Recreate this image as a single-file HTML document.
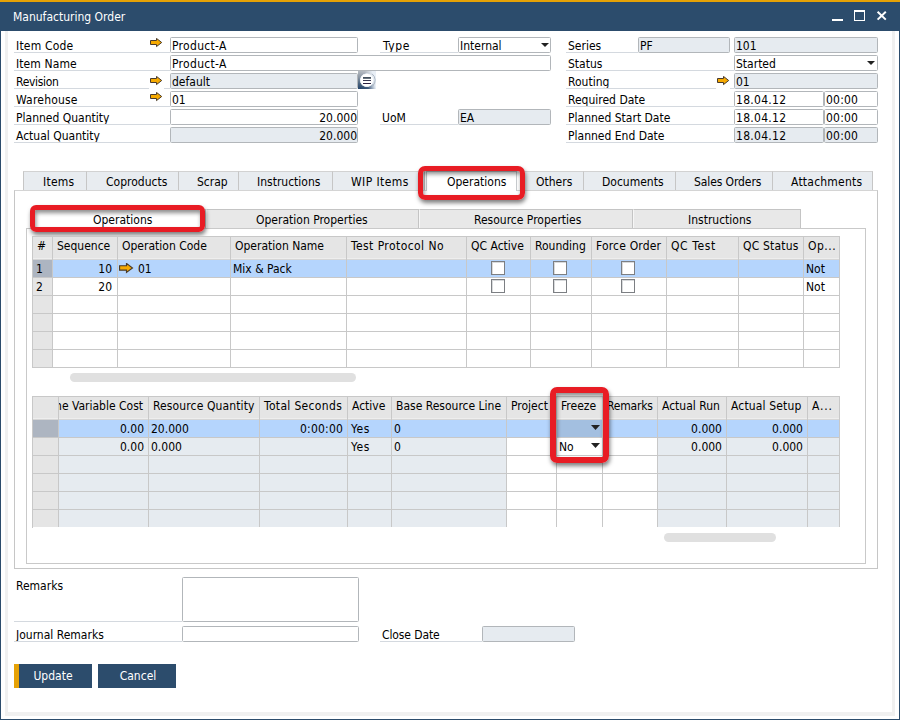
<!DOCTYPE html>
<html><head><meta charset="utf-8"><title>Manufacturing Order</title>
<style>
html,body{margin:0;padding:0;}
body{width:900px;height:720px;position:relative;overflow:hidden;background:#fff;font-family:"DejaVu Sans Condensed","DejaVu Sans","Liberation Sans",sans-serif;font-size:12px;color:#000;font-stretch:condensed;}
div,svg{position:absolute;box-sizing:border-box;}
.t{white-space:nowrap;line-height:16px;height:16px;}
.f{border:1px solid #b2b6ba;border-radius:1.5px;white-space:nowrap;line-height:14px;padding:0 2px 0 1px;overflow:hidden;}
.f span{position:relative;top:1px;}
.tab{background:#e8ecf0;border:1px solid #c6c6c6;border-top-color:#d2d2d2;border-bottom:none;line-height:16px;white-space:nowrap;}
.stab{background:#e8e8e8;border-top:1px solid #c4c4c4;border-right:1px solid #c4c4c4;line-height:20px;text-align:center;white-space:nowrap;padding-left:6px;overflow:hidden;}
.ls1{letter-spacing:0.3px}.ls2{letter-spacing:0.6px}.ls3{letter-spacing:0.15px}
.gh{background:linear-gradient(to bottom,#e5e5e5 0,#e5e5e5 21px,#eee 21px,#eee 22px,#d6d6d6 22px);border-right:1px solid #c8c8c8;line-height:18px;white-space:nowrap;overflow:hidden;padding-left:4px;}
.c{border-right:1px solid #c8c8c8;border-bottom:1px solid #c8c8c8;line-height:19px;white-space:nowrap;overflow:hidden;padding:0 3px;}
.cb{width:14px;height:14px;border:1px solid #7c7f83;background:#fff;box-shadow:inset 1px 1px 0 #d8dadc;}
</style></head><body>

<div class="" style="left:0px;top:0px;width:900px;height:2px;background:#e6a206"></div>
<div class="" style="left:0px;top:2px;width:900px;height:29px;background:#2c4c6c"></div>
<div class="" style="left:0px;top:31px;width:1px;height:689px;background:#2c4c6c"></div>
<div class="" style="left:899px;top:31px;width:1px;height:689px;background:#2c4c6c"></div>
<div class="" style="left:0px;top:719px;width:900px;height:1px;background:#2c4c6c"></div>
<div class="" style="left:5px;top:31px;width:3px;height:685px;background:#f0f0f0"></div>
<div class="" style="left:892px;top:31px;width:3px;height:685px;background:#f0f0f0"></div>
<div class="" style="left:5px;top:712px;width:890px;height:4px;background:#f0f0f0"></div>
<div class="t" style="left:13px;top:9px;color:#fff;">Manufacturing Order</div>
<div class="" style="left:832px;top:19px;width:11px;height:2px;background:#fff"></div>
<div class="" style="left:854px;top:10px;width:11px;height:11px;border:1px solid #fff;border-top-width:2px"></div>
<svg class="a" style="left:876px;top:10px" width="12" height="12" viewBox="0 0 12 12"><path d="M1.6 1.8 L9.8 9.6 M9.8 1.8 L1.6 9.6" stroke="#fff" stroke-width="2" fill="none"/></svg>
<div class="t" style="left:16px;top:38px;letter-spacing:0.2px">Item Code</div>
<div class="" style="left:14px;top:52px;width:156px;height:1px;background:#d4d9df"></div>
<div class="t" style="left:16px;top:56px;letter-spacing:0.1px">Item Name</div>
<div class="" style="left:14px;top:70px;width:156px;height:1px;background:#d4d9df"></div>
<div class="t" style="left:16px;top:74px;letter-spacing:-0.3px">Revision</div>
<div class="" style="left:14px;top:88px;width:156px;height:1px;background:#d4d9df"></div>
<div class="t" style="left:16px;top:92px;letter-spacing:0.2px">Warehouse</div>
<div class="" style="left:14px;top:106px;width:156px;height:1px;background:#d4d9df"></div>
<div class="t" style="left:16px;top:110px;">Planned Quantity</div>
<div class="" style="left:14px;top:124px;width:156px;height:1px;background:#d4d9df"></div>
<div class="t" style="left:16px;top:128px;">Actual Quantity</div>
<div class="" style="left:14px;top:142px;width:156px;height:1px;background:#d4d9df"></div>
<svg class="a" style="left:150px;top:38px" width="13" height="10" viewBox="0 0 13 10" preserveAspectRatio="none"><path d="M0.5 2.5 H6.5 V0.4 L11.7 4.5 L6.5 8.6 V6.5 H0.5 Z" fill="#f6aa00" stroke="#4a3b2c" stroke-width="1" stroke-linejoin="miter"/></svg>
<svg class="a" style="left:150px;top:76px" width="13" height="10" viewBox="0 0 13 10" preserveAspectRatio="none"><path d="M0.5 2.5 H6.5 V0.4 L11.7 4.5 L6.5 8.6 V6.5 H0.5 Z" fill="#f6aa00" stroke="#4a3b2c" stroke-width="1" stroke-linejoin="miter"/></svg>
<svg class="a" style="left:150px;top:92px" width="13" height="10" viewBox="0 0 13 10" preserveAspectRatio="none"><path d="M0.5 2.5 H6.5 V0.4 L11.7 4.5 L6.5 8.6 V6.5 H0.5 Z" fill="#f6aa00" stroke="#4a3b2c" stroke-width="1" stroke-linejoin="miter"/></svg>
<div class="" style="left:149px;top:88px;width:15px;height:1px;background:#fff"></div>
<div class="f" style="left:170px;top:37px;width:188px;height:16px;background:#fff;text-align:left;letter-spacing:0.3px;"><span>Product-A</span></div>
<div class="f" style="left:170px;top:55px;width:381px;height:16px;background:#fff;text-align:left;letter-spacing:0.3px;"><span>Product-A</span></div>
<div class="f" style="left:170px;top:73px;width:188px;height:16px;background:#e6ebf0;text-align:left;"><span>default</span></div>
<div class="f" style="left:170px;top:91px;width:188px;height:16px;background:#fff;text-align:left;"><span>01</span></div>
<div class="f" style="left:170px;top:109px;width:188px;height:16px;background:#fff;text-align:right;padding-right:0;"><span>20.000</span></div>
<div class="f" style="left:170px;top:127px;width:188px;height:16px;background:#e6ebf0;text-align:right;padding-right:0;"><span>20.000</span></div>
<svg class="a" style="left:358px;top:71px" width="18" height="18" viewBox="0 0 18 18"><defs><linearGradient id="rg" x1="0" y1="0" x2="0" y2="1"><stop offset="0" stop-color="#b3b8be"/><stop offset="0.35" stop-color="#8995a3"/><stop offset="0.7" stop-color="#4d6580"/><stop offset="1" stop-color="#23436a"/></linearGradient><linearGradient id="rm" x1="0" y1="0.2" x2="1" y2="0"><stop offset="0" stop-color="#fff"/><stop offset="0.4" stop-color="#fff" stop-opacity="0.9"/><stop offset="0.8" stop-color="#fff" stop-opacity="0"/></linearGradient><mask id="rk"><rect x="0" y="0" width="18" height="18" fill="url(#rm)"/></mask><radialGradient id="rc" cx="0.5" cy="0.5" r="0.5"><stop offset="0" stop-color="#fff"/><stop offset="0.8" stop-color="#fff"/><stop offset="0.92" stop-color="#eef3f9" stop-opacity="0.85"/><stop offset="1" stop-color="#dfe7f0" stop-opacity="0"/></radialGradient></defs><rect x="0" y="0" width="18" height="18" fill="#e9eff6"/><rect x="0" y="0" width="18" height="18" fill="url(#rg)" mask="url(#rk)"/><path d="M14 2.8 A8.2 8.2 0 0 1 14.8 15" fill="none" stroke="#a7b1bd" stroke-width="0.9"/><circle cx="8.8" cy="9.2" r="7.2" fill="url(#rc)"/><path d="M5 6H13V7.8H5Z" fill="#45525f"/><path d="M5 9H13V10H5Z" fill="#3a3a55"/><path d="M5 12H13V13H5Z" fill="#2a2040"/></svg>
<div class="t" style="left:383px;top:38px;letter-spacing:0.6px">Type</div>
<div class="" style="left:380px;top:52px;width:78px;height:1px;background:#d4d9df"></div>
<div class="f" style="left:458px;top:37px;width:93px;height:16px;background:#fff;text-align:left;"><span>Internal</span></div>
<svg class="a" style="left:541px;top:43px" width="8" height="4" viewBox="0 0 8 4"><path d="M0 0 H8 L4.0 4 Z" fill="#222"/></svg>
<div class="t" style="left:382px;top:110px;">UoM</div>
<div class="" style="left:380px;top:124px;width:78px;height:1px;background:#d4d9df"></div>
<div class="f" style="left:458px;top:109px;width:93px;height:16px;background:#e6ebf0;text-align:left;"><span>EA</span></div>
<div class="t" style="left:568px;top:38px;">Series</div>
<div class="" style="left:566px;top:52px;width:72px;height:1px;background:#d4d9df"></div>
<div class="t" style="left:568px;top:56px;">Status</div>
<div class="" style="left:566px;top:70px;width:168px;height:1px;background:#d4d9df"></div>
<div class="t" style="left:568px;top:74px;">Routing</div>
<div class="" style="left:566px;top:88px;width:168px;height:1px;background:#d4d9df"></div>
<div class="t" style="left:568px;top:92px;">Required Date</div>
<div class="" style="left:566px;top:106px;width:168px;height:1px;background:#d4d9df"></div>
<div class="t" style="left:568px;top:110px;">Planned Start Date</div>
<div class="" style="left:566px;top:124px;width:168px;height:1px;background:#d4d9df"></div>
<div class="t" style="left:568px;top:128px;">Planned End Date</div>
<div class="" style="left:566px;top:142px;width:168px;height:1px;background:#d4d9df"></div>
<div class="f" style="left:638px;top:37px;width:92px;height:16px;background:#e6ebf0;text-align:left;"><span>PF</span></div>
<div class="f" style="left:734px;top:37px;width:144px;height:16px;background:#e6ebf0;text-align:left;"><span>101</span></div>
<div class="f" style="left:734px;top:55px;width:144px;height:16px;background:#fff;text-align:left;"><span>Started</span></div>
<svg class="a" style="left:867px;top:61px" width="8" height="4" viewBox="0 0 8 4"><path d="M0 0 H8 L4.0 4 Z" fill="#222"/></svg>
<div class="" style="left:716px;top:88px;width:14px;height:1px;background:#fff"></div>
<svg class="a" style="left:717px;top:76px" width="13" height="10" viewBox="0 0 13 10" preserveAspectRatio="none"><path d="M0.5 2.5 H6.5 V0.4 L11.7 4.5 L6.5 8.6 V6.5 H0.5 Z" fill="#f6aa00" stroke="#4a3b2c" stroke-width="1" stroke-linejoin="miter"/></svg>
<div class="f" style="left:734px;top:73px;width:144px;height:16px;background:#e6ebf0;text-align:left;"><span>01</span></div>
<div class="f" style="left:734px;top:91px;width:90px;height:16px;background:#fff;text-align:left;letter-spacing:0.28px;"><span>18.04.12</span></div>
<div class="f" style="left:824px;top:91px;width:54px;height:16px;background:#fff;text-align:left;letter-spacing:0.2px;"><span>00:00</span></div>
<div class="f" style="left:734px;top:109px;width:90px;height:16px;background:#fff;text-align:left;letter-spacing:0.28px;"><span>18.04.12</span></div>
<div class="f" style="left:824px;top:109px;width:54px;height:16px;background:#fff;text-align:left;letter-spacing:0.2px;"><span>00:00</span></div>
<div class="f" style="left:734px;top:127px;width:90px;height:16px;background:#e6ebf0;text-align:left;letter-spacing:0.28px;"><span>18.04.12</span></div>
<div class="f" style="left:824px;top:127px;width:54px;height:16px;background:#e6ebf0;text-align:left;letter-spacing:0.2px;"><span>00:00</span></div>
<div class="" style="left:14px;top:190px;width:864px;height:379px;border:1px solid #c6c6c6;border-top-color:#d4d4d4;background:#fff"></div>
<div class="tab" style="left:23px;top:171px;width:64px;height:19px;"><div class="t" style="left:19px;top:2px;letter-spacing:0.25px">Items</div></div>
<div class="tab" style="left:86px;top:171px;width:93px;height:19px;"><div class="t" style="left:19px;top:2px;letter-spacing:0px">Coproducts</div></div>
<div class="tab" style="left:178px;top:171px;width:61px;height:19px;"><div class="t" style="left:18px;top:2px;letter-spacing:0px">Scrap</div></div>
<div class="tab" style="left:238px;top:171px;width:95px;height:19px;"><div class="t" style="left:18px;top:2px;letter-spacing:0px">Instructions</div></div>
<div class="tab" style="left:332px;top:171px;width:93px;height:19px;"><div class="t" style="left:18px;top:2px;letter-spacing:0.42px">WIP Items</div></div>
<div class="tab" style="left:521px;top:171px;width:63px;height:19px;"><div class="t" style="left:14px;top:2px;letter-spacing:0px">Others</div></div>
<div class="tab" style="left:583px;top:171px;width:93px;height:19px;"><div class="t" style="left:18px;top:2px;letter-spacing:0px">Documents</div></div>
<div class="tab" style="left:675px;top:171px;width:98px;height:19px;"><div class="t" style="left:18px;top:2px;letter-spacing:-0.1px">Sales Orders</div></div>
<div class="tab" style="left:772px;top:171px;width:101px;height:19px;"><div class="t" style="left:18px;top:2px;letter-spacing:0.22px">Attachments</div></div>
<div class="" style="left:426px;top:171px;width:91px;height:20px;background:#fff;border:1px solid #c6cacd;border-bottom:none"><div class="t" style="left:20px;top:2px">Operations</div></div>
<div class="" style="left:418px;top:166px;width:107px;height:34px;border:5px solid #e81c24;border-radius:7px;box-shadow:1px 3px 4px rgba(0,0,0,.5), inset 1px 3px 4px rgba(0,0,0,.45)"></div>
<div class="" style="left:26px;top:228px;width:840px;height:336px;border:1px solid #c9c9c9;background:transparent"></div>
<div class="stab" style="left:32px;top:209px;width:174px;height:19px;background:#fff;text-align:left;padding-left:61px;">Operations</div>
<div class="stab" style="left:206px;top:209px;width:213px;height:19px;border-left:1px solid #f6f6f6;text-align:left;padding-left:49px;">Operation Properties</div>
<div class="stab" style="left:419px;top:209px;width:214px;height:19px;border-left:1px solid #f6f6f6;text-align:left;padding-left:54px;">Resource Properties</div>
<div class="stab" style="left:633px;top:209px;width:168px;height:19px;border-left:1px solid #f6f6f6;text-align:left;padding-left:54px;">Instructions</div>
<div class="" style="left:30px;top:205px;width:175px;height:27px;border:5px solid #e81c24;border-radius:6px;box-shadow:1px 3px 4px rgba(0,0,0,.5), inset 1px 3px 4px rgba(0,0,0,.45)"></div>
<div class="" style="left:32px;top:236px;width:808px;height:1px;background:#c8c8c8"></div>
<div class="gh" style="left:33px;top:237px;width:20px;height:23px;">#</div>
<div class="gh" style="left:53px;top:237px;width:65px;height:23px;">Sequence</div>
<div class="gh" style="left:118px;top:237px;width:113px;height:23px;">Operation Code</div>
<div class="gh" style="left:231px;top:237px;width:116px;height:23px;">Operation Name</div>
<div class="gh" style="left:347px;top:237px;width:120px;height:23px;letter-spacing:0.43px;">Test Protocol No</div>
<div class="gh" style="left:467px;top:237px;width:64px;height:23px;">QC Active</div>
<div class="gh" style="left:531px;top:237px;width:61px;height:23px;">Rounding</div>
<div class="gh" style="left:592px;top:237px;width:75px;height:23px;letter-spacing:0.18px;">Force Order</div>
<div class="gh" style="left:667px;top:237px;width:72px;height:23px;letter-spacing:0.6px;">QC Test</div>
<div class="gh" style="left:739px;top:237px;width:65px;height:23px;letter-spacing:0.2px;">QC Status</div>
<div class="gh" style="left:804px;top:237px;width:36px;height:23px;letter-spacing:0.5px;">Op...</div>
<div class="" style="left:32px;top:236px;width:1px;height:132px;background:#c8c8c8"></div>
<div class="c" style="left:33px;top:260px;width:20px;height:18px;background:#adb5c1;">1</div>
<div class="c" style="left:53px;top:260px;width:65px;height:18px;background:#b5d5fd;text-align:right;padding-right:5px;">10</div>
<div class="c" style="left:118px;top:260px;width:113px;height:18px;background:#b5d5fd;"><span style="padding-left:17px">01</span></div>
<div class="c" style="left:231px;top:260px;width:116px;height:18px;background:#b5d5fd;padding-left:2px;">Mix &amp; Pack</div>
<div class="c" style="left:347px;top:260px;width:120px;height:18px;background:#b5d5fd;"></div>
<div class="c" style="left:467px;top:260px;width:64px;height:18px;background:#b5d5fd;"><div class="cb" style="left:24px;top:1px"></div></div>
<div class="c" style="left:531px;top:260px;width:61px;height:18px;background:#b5d5fd;"><div class="cb" style="left:22px;top:1px"></div></div>
<div class="c" style="left:592px;top:260px;width:75px;height:18px;background:#b5d5fd;"><div class="cb" style="left:29px;top:1px"></div></div>
<div class="c" style="left:667px;top:260px;width:72px;height:18px;background:#b5d5fd;"></div>
<div class="c" style="left:739px;top:260px;width:65px;height:18px;background:#b5d5fd;"></div>
<div class="c" style="left:804px;top:260px;width:36px;height:18px;background:#b5d5fd;padding-left:2px;">Not</div>
<div class="c" style="left:33px;top:278px;width:20px;height:18px;background:#e5e5e5;">2</div>
<div class="c" style="left:53px;top:278px;width:65px;height:18px;background:#fff;text-align:right;padding-right:5px;">20</div>
<div class="c" style="left:118px;top:278px;width:113px;height:18px;background:#fff;"></div>
<div class="c" style="left:231px;top:278px;width:116px;height:18px;background:#fff;padding-left:2px;"></div>
<div class="c" style="left:347px;top:278px;width:120px;height:18px;background:#fff;"></div>
<div class="c" style="left:467px;top:278px;width:64px;height:18px;background:#fff;"><div class="cb" style="left:24px;top:1px"></div></div>
<div class="c" style="left:531px;top:278px;width:61px;height:18px;background:#fff;"><div class="cb" style="left:22px;top:1px"></div></div>
<div class="c" style="left:592px;top:278px;width:75px;height:18px;background:#fff;"><div class="cb" style="left:29px;top:1px"></div></div>
<div class="c" style="left:667px;top:278px;width:72px;height:18px;background:#fff;"></div>
<div class="c" style="left:739px;top:278px;width:65px;height:18px;background:#fff;"></div>
<div class="c" style="left:804px;top:278px;width:36px;height:18px;background:#fff;padding-left:2px;">Not</div>
<div class="c" style="left:33px;top:296px;width:20px;height:18px;background:#e5e5e5;"></div>
<div class="c" style="left:53px;top:296px;width:65px;height:18px;background:#fff;text-align:right;padding-right:5px;"></div>
<div class="c" style="left:118px;top:296px;width:113px;height:18px;background:#fff;"></div>
<div class="c" style="left:231px;top:296px;width:116px;height:18px;background:#fff;padding-left:2px;"></div>
<div class="c" style="left:347px;top:296px;width:120px;height:18px;background:#fff;"></div>
<div class="c" style="left:467px;top:296px;width:64px;height:18px;background:#fff;"></div>
<div class="c" style="left:531px;top:296px;width:61px;height:18px;background:#fff;"></div>
<div class="c" style="left:592px;top:296px;width:75px;height:18px;background:#fff;"></div>
<div class="c" style="left:667px;top:296px;width:72px;height:18px;background:#fff;"></div>
<div class="c" style="left:739px;top:296px;width:65px;height:18px;background:#fff;"></div>
<div class="c" style="left:804px;top:296px;width:36px;height:18px;background:#fff;padding-left:2px;"></div>
<div class="c" style="left:33px;top:314px;width:20px;height:18px;background:#e5e5e5;"></div>
<div class="c" style="left:53px;top:314px;width:65px;height:18px;background:#fff;text-align:right;padding-right:5px;"></div>
<div class="c" style="left:118px;top:314px;width:113px;height:18px;background:#fff;"></div>
<div class="c" style="left:231px;top:314px;width:116px;height:18px;background:#fff;padding-left:2px;"></div>
<div class="c" style="left:347px;top:314px;width:120px;height:18px;background:#fff;"></div>
<div class="c" style="left:467px;top:314px;width:64px;height:18px;background:#fff;"></div>
<div class="c" style="left:531px;top:314px;width:61px;height:18px;background:#fff;"></div>
<div class="c" style="left:592px;top:314px;width:75px;height:18px;background:#fff;"></div>
<div class="c" style="left:667px;top:314px;width:72px;height:18px;background:#fff;"></div>
<div class="c" style="left:739px;top:314px;width:65px;height:18px;background:#fff;"></div>
<div class="c" style="left:804px;top:314px;width:36px;height:18px;background:#fff;padding-left:2px;"></div>
<div class="c" style="left:33px;top:332px;width:20px;height:18px;background:#e5e5e5;"></div>
<div class="c" style="left:53px;top:332px;width:65px;height:18px;background:#fff;text-align:right;padding-right:5px;"></div>
<div class="c" style="left:118px;top:332px;width:113px;height:18px;background:#fff;"></div>
<div class="c" style="left:231px;top:332px;width:116px;height:18px;background:#fff;padding-left:2px;"></div>
<div class="c" style="left:347px;top:332px;width:120px;height:18px;background:#fff;"></div>
<div class="c" style="left:467px;top:332px;width:64px;height:18px;background:#fff;"></div>
<div class="c" style="left:531px;top:332px;width:61px;height:18px;background:#fff;"></div>
<div class="c" style="left:592px;top:332px;width:75px;height:18px;background:#fff;"></div>
<div class="c" style="left:667px;top:332px;width:72px;height:18px;background:#fff;"></div>
<div class="c" style="left:739px;top:332px;width:65px;height:18px;background:#fff;"></div>
<div class="c" style="left:804px;top:332px;width:36px;height:18px;background:#fff;padding-left:2px;"></div>
<div class="c" style="left:33px;top:350px;width:20px;height:18px;background:#e5e5e5;"></div>
<div class="c" style="left:53px;top:350px;width:65px;height:18px;background:#fff;text-align:right;padding-right:5px;"></div>
<div class="c" style="left:118px;top:350px;width:113px;height:18px;background:#fff;"></div>
<div class="c" style="left:231px;top:350px;width:116px;height:18px;background:#fff;padding-left:2px;"></div>
<div class="c" style="left:347px;top:350px;width:120px;height:18px;background:#fff;"></div>
<div class="c" style="left:467px;top:350px;width:64px;height:18px;background:#fff;"></div>
<div class="c" style="left:531px;top:350px;width:61px;height:18px;background:#fff;"></div>
<div class="c" style="left:592px;top:350px;width:75px;height:18px;background:#fff;"></div>
<div class="c" style="left:667px;top:350px;width:72px;height:18px;background:#fff;"></div>
<div class="c" style="left:739px;top:350px;width:65px;height:18px;background:#fff;"></div>
<div class="c" style="left:804px;top:350px;width:36px;height:18px;background:#fff;padding-left:2px;"></div>
<svg class="a" style="left:119px;top:263px" width="15" height="11" viewBox="0 0 13 10" preserveAspectRatio="none"><path d="M0.5 2.5 H6.5 V0.4 L11.7 4.5 L6.5 8.6 V6.5 H0.5 Z" fill="#f6aa00" stroke="#4a3b2c" stroke-width="1" stroke-linejoin="miter"/></svg>
<div class="" style="left:70px;top:373px;width:286px;height:9px;background:#e0e0e0;border-radius:5px"></div>
<div class="" style="left:32px;top:396px;width:808px;height:1px;background:#c8c8c8"></div>
<div class="gh" style="left:33px;top:397px;width:26px;height:23px;"></div>
<div class="gh" style="left:59px;top:397px;width:90px;height:23px;padding:0"><div class="t" style="right:5px;top:0px;line-height:18px;height:18px">he Variable Cost</div></div>
<div class="gh" style="left:149px;top:397px;width:111px;height:23px;letter-spacing:0.12px;">Resource Quantity</div>
<div class="gh" style="left:260px;top:397px;width:88px;height:23px;letter-spacing:0.33px;">Total Seconds</div>
<div class="gh" style="left:348px;top:397px;width:44px;height:23px;">Active</div>
<div class="gh" style="left:392px;top:397px;width:115px;height:23px;">Base Resource Line</div>
<div class="gh" style="left:507px;top:397px;width:50px;height:23px;">Project</div>
<div class="gh" style="left:557px;top:397px;width:46px;height:23px;">Freeze</div>
<div class="gh" style="left:603px;top:397px;width:55px;height:23px;letter-spacing:-0.2px;">Remarks</div>
<div class="gh" style="left:658px;top:397px;width:69px;height:23px;">Actual Run</div>
<div class="gh" style="left:727px;top:397px;width:81px;height:23px;letter-spacing:0.15px;">Actual Setup</div>
<div class="gh" style="left:808px;top:397px;width:32px;height:23px;letter-spacing:0.8px;">A...</div>
<div class="" style="left:32px;top:396px;width:1px;height:132px;background:#c8c8c8"></div>
<div class="c" style="left:33px;top:420px;width:26px;height:18px;background:#adb5c1;padding-left:2px;"></div>
<div class="c" style="left:59px;top:420px;width:90px;height:18px;background:#b5d5fd;text-align:right;padding-right:4px;">0.00</div>
<div class="c" style="left:149px;top:420px;width:111px;height:18px;background:#b5d5fd;padding-left:2px;">20.000</div>
<div class="c" style="left:260px;top:420px;width:88px;height:18px;background:#b5d5fd;text-align:right;padding-right:4px;letter-spacing:0.25px;padding-right:3.75px;">0:00:00</div>
<div class="c" style="left:348px;top:420px;width:44px;height:18px;background:#b5d5fd;padding-left:2px;padding-left:3px;letter-spacing:0.5px;">Yes</div>
<div class="c" style="left:392px;top:420px;width:115px;height:18px;background:#b5d5fd;padding-left:2px;">0</div>
<div class="c" style="left:507px;top:420px;width:50px;height:18px;background:#b5d5fd;padding-left:2px;"></div>
<div class="c" style="left:557px;top:420px;width:46px;height:18px;background:#a3bfe0;padding-left:2px;"></div>
<div class="c" style="left:603px;top:420px;width:55px;height:18px;background:#b5d5fd;padding-left:2px;"></div>
<div class="c" style="left:658px;top:420px;width:69px;height:18px;background:#b5d5fd;text-align:right;padding-right:4px;">0.000</div>
<div class="c" style="left:727px;top:420px;width:81px;height:18px;background:#b5d5fd;text-align:right;padding-right:4px;">0.000</div>
<div class="c" style="left:808px;top:420px;width:32px;height:18px;background:#b5d5fd;padding-left:2px;"></div>
<div class="c" style="left:33px;top:438px;width:26px;height:18px;background:#e5e5e5;padding-left:2px;"></div>
<div class="c" style="left:59px;top:438px;width:90px;height:18px;background:#e6ebf0;text-align:right;padding-right:4px;">0.00</div>
<div class="c" style="left:149px;top:438px;width:111px;height:18px;background:#e6ebf0;padding-left:2px;">0.000</div>
<div class="c" style="left:260px;top:438px;width:88px;height:18px;background:#e6ebf0;text-align:right;padding-right:4px;"></div>
<div class="c" style="left:348px;top:438px;width:44px;height:18px;background:#e6ebf0;padding-left:2px;padding-left:3px;letter-spacing:0.5px;">Yes</div>
<div class="c" style="left:392px;top:438px;width:115px;height:18px;background:#e6ebf0;padding-left:2px;">0</div>
<div class="c" style="left:507px;top:438px;width:50px;height:18px;background:#fff;padding-left:2px;"></div>
<div class="c" style="left:557px;top:438px;width:46px;height:18px;background:#fff;padding-left:2px;">No</div>
<div class="c" style="left:603px;top:438px;width:55px;height:18px;background:#fff;padding-left:2px;"></div>
<div class="c" style="left:658px;top:438px;width:69px;height:18px;background:#e6ebf0;text-align:right;padding-right:4px;">0.000</div>
<div class="c" style="left:727px;top:438px;width:81px;height:18px;background:#e6ebf0;text-align:right;padding-right:4px;">0.000</div>
<div class="c" style="left:808px;top:438px;width:32px;height:18px;background:#e6ebf0;padding-left:2px;"></div>
<div class="c" style="left:33px;top:456px;width:26px;height:18px;background:#e5e5e5;padding-left:2px;"></div>
<div class="c" style="left:59px;top:456px;width:90px;height:18px;background:#e6ebf0;text-align:right;padding-right:4px;"></div>
<div class="c" style="left:149px;top:456px;width:111px;height:18px;background:#e6ebf0;padding-left:2px;"></div>
<div class="c" style="left:260px;top:456px;width:88px;height:18px;background:#e6ebf0;text-align:right;padding-right:4px;"></div>
<div class="c" style="left:348px;top:456px;width:44px;height:18px;background:#e6ebf0;padding-left:2px;"></div>
<div class="c" style="left:392px;top:456px;width:115px;height:18px;background:#e6ebf0;padding-left:2px;"></div>
<div class="c" style="left:507px;top:456px;width:50px;height:18px;background:#fff;padding-left:2px;"></div>
<div class="c" style="left:557px;top:456px;width:46px;height:18px;background:#fff;padding-left:2px;"></div>
<div class="c" style="left:603px;top:456px;width:55px;height:18px;background:#fff;padding-left:2px;"></div>
<div class="c" style="left:658px;top:456px;width:69px;height:18px;background:#e6ebf0;text-align:right;padding-right:4px;"></div>
<div class="c" style="left:727px;top:456px;width:81px;height:18px;background:#e6ebf0;text-align:right;padding-right:4px;"></div>
<div class="c" style="left:808px;top:456px;width:32px;height:18px;background:#e6ebf0;padding-left:2px;"></div>
<div class="c" style="left:33px;top:474px;width:26px;height:18px;background:#e5e5e5;padding-left:2px;"></div>
<div class="c" style="left:59px;top:474px;width:90px;height:18px;background:#e6ebf0;text-align:right;padding-right:4px;"></div>
<div class="c" style="left:149px;top:474px;width:111px;height:18px;background:#e6ebf0;padding-left:2px;"></div>
<div class="c" style="left:260px;top:474px;width:88px;height:18px;background:#e6ebf0;text-align:right;padding-right:4px;"></div>
<div class="c" style="left:348px;top:474px;width:44px;height:18px;background:#e6ebf0;padding-left:2px;"></div>
<div class="c" style="left:392px;top:474px;width:115px;height:18px;background:#e6ebf0;padding-left:2px;"></div>
<div class="c" style="left:507px;top:474px;width:50px;height:18px;background:#fff;padding-left:2px;"></div>
<div class="c" style="left:557px;top:474px;width:46px;height:18px;background:#fff;padding-left:2px;"></div>
<div class="c" style="left:603px;top:474px;width:55px;height:18px;background:#fff;padding-left:2px;"></div>
<div class="c" style="left:658px;top:474px;width:69px;height:18px;background:#e6ebf0;text-align:right;padding-right:4px;"></div>
<div class="c" style="left:727px;top:474px;width:81px;height:18px;background:#e6ebf0;text-align:right;padding-right:4px;"></div>
<div class="c" style="left:808px;top:474px;width:32px;height:18px;background:#e6ebf0;padding-left:2px;"></div>
<div class="c" style="left:33px;top:492px;width:26px;height:18px;background:#e5e5e5;padding-left:2px;"></div>
<div class="c" style="left:59px;top:492px;width:90px;height:18px;background:#e6ebf0;text-align:right;padding-right:4px;"></div>
<div class="c" style="left:149px;top:492px;width:111px;height:18px;background:#e6ebf0;padding-left:2px;"></div>
<div class="c" style="left:260px;top:492px;width:88px;height:18px;background:#e6ebf0;text-align:right;padding-right:4px;"></div>
<div class="c" style="left:348px;top:492px;width:44px;height:18px;background:#e6ebf0;padding-left:2px;"></div>
<div class="c" style="left:392px;top:492px;width:115px;height:18px;background:#e6ebf0;padding-left:2px;"></div>
<div class="c" style="left:507px;top:492px;width:50px;height:18px;background:#fff;padding-left:2px;"></div>
<div class="c" style="left:557px;top:492px;width:46px;height:18px;background:#fff;padding-left:2px;"></div>
<div class="c" style="left:603px;top:492px;width:55px;height:18px;background:#fff;padding-left:2px;"></div>
<div class="c" style="left:658px;top:492px;width:69px;height:18px;background:#e6ebf0;text-align:right;padding-right:4px;"></div>
<div class="c" style="left:727px;top:492px;width:81px;height:18px;background:#e6ebf0;text-align:right;padding-right:4px;"></div>
<div class="c" style="left:808px;top:492px;width:32px;height:18px;background:#e6ebf0;padding-left:2px;"></div>
<div class="c" style="left:33px;top:510px;width:26px;height:17px;background:#e5e5e5;padding-left:2px;border-bottom:none;"></div>
<div class="c" style="left:59px;top:510px;width:90px;height:17px;background:#e6ebf0;text-align:right;padding-right:4px;border-bottom:none;"></div>
<div class="c" style="left:149px;top:510px;width:111px;height:17px;background:#e6ebf0;padding-left:2px;border-bottom:none;"></div>
<div class="c" style="left:260px;top:510px;width:88px;height:17px;background:#e6ebf0;text-align:right;padding-right:4px;border-bottom:none;"></div>
<div class="c" style="left:348px;top:510px;width:44px;height:17px;background:#e6ebf0;padding-left:2px;border-bottom:none;"></div>
<div class="c" style="left:392px;top:510px;width:115px;height:17px;background:#e6ebf0;padding-left:2px;border-bottom:none;"></div>
<div class="c" style="left:507px;top:510px;width:50px;height:17px;background:#fff;padding-left:2px;border-bottom:none;"></div>
<div class="c" style="left:557px;top:510px;width:46px;height:17px;background:#fff;padding-left:2px;border-bottom:none;"></div>
<div class="c" style="left:603px;top:510px;width:55px;height:17px;background:#fff;padding-left:2px;border-bottom:none;"></div>
<div class="c" style="left:658px;top:510px;width:69px;height:17px;background:#e6ebf0;text-align:right;padding-right:4px;border-bottom:none;"></div>
<div class="c" style="left:727px;top:510px;width:81px;height:17px;background:#e6ebf0;text-align:right;padding-right:4px;border-bottom:none;"></div>
<div class="c" style="left:808px;top:510px;width:32px;height:17px;background:#e6ebf0;padding-left:2px;border-bottom:none;"></div>
<svg class="a" style="left:591px;top:425px" width="9" height="5" viewBox="0 0 9 5"><path d="M0 0 H9 L4.5 5 Z" fill="#222"/></svg>
<svg class="a" style="left:591px;top:443px" width="9" height="5" viewBox="0 0 9 5"><path d="M0 0 H9 L4.5 5 Z" fill="#222"/></svg>
<div class="" style="left:664px;top:533px;width:112px;height:9px;background:#e0e0e0;border-radius:5px"></div>
<div class="" style="left:550px;top:387px;width:59px;height:76px;border:6px solid #e81c24;border-radius:7px;box-shadow:1px 3px 4px rgba(0,0,0,.5), inset 1px 3px 4px rgba(0,0,0,.45)"></div>
<div class="t" style="left:16px;top:578px;">Remarks</div>
<div class="" style="left:14px;top:621px;width:168px;height:1px;background:#d4d9df"></div>
<div class="f" style="left:182px;top:577px;width:177px;height:45px;background:#fff;text-align:left;"><span></span></div>
<div class="t" style="left:16px;top:627px;">Journal Remarks</div>
<div class="" style="left:14px;top:641px;width:168px;height:1px;background:#d4d9df"></div>
<div class="f" style="left:182px;top:626px;width:177px;height:16px;background:#fff;text-align:left;"><span></span></div>
<div class="t" style="left:382px;top:627px;letter-spacing:-0.1px">Close Date</div>
<div class="" style="left:380px;top:641px;width:102px;height:1px;background:#d4d9df"></div>
<div class="f" style="left:482px;top:626px;width:93px;height:16px;background:#e6ebf0;text-align:left;"><span></span></div>
<div class="" style="left:14px;top:664px;width:78px;height:24px;background:#2c4c6c;border-left:5px solid #e6a206;color:#fff;line-height:25px;text-align:center;padding-right:5px"><span style="position:relative;left:0px">Update</span></div>
<div class="" style="left:98px;top:664px;width:78px;height:24px;background:#2c4c6c;color:#fff;line-height:25px;text-align:center;padding-left:2px">Cancel</div>
</body></html>
